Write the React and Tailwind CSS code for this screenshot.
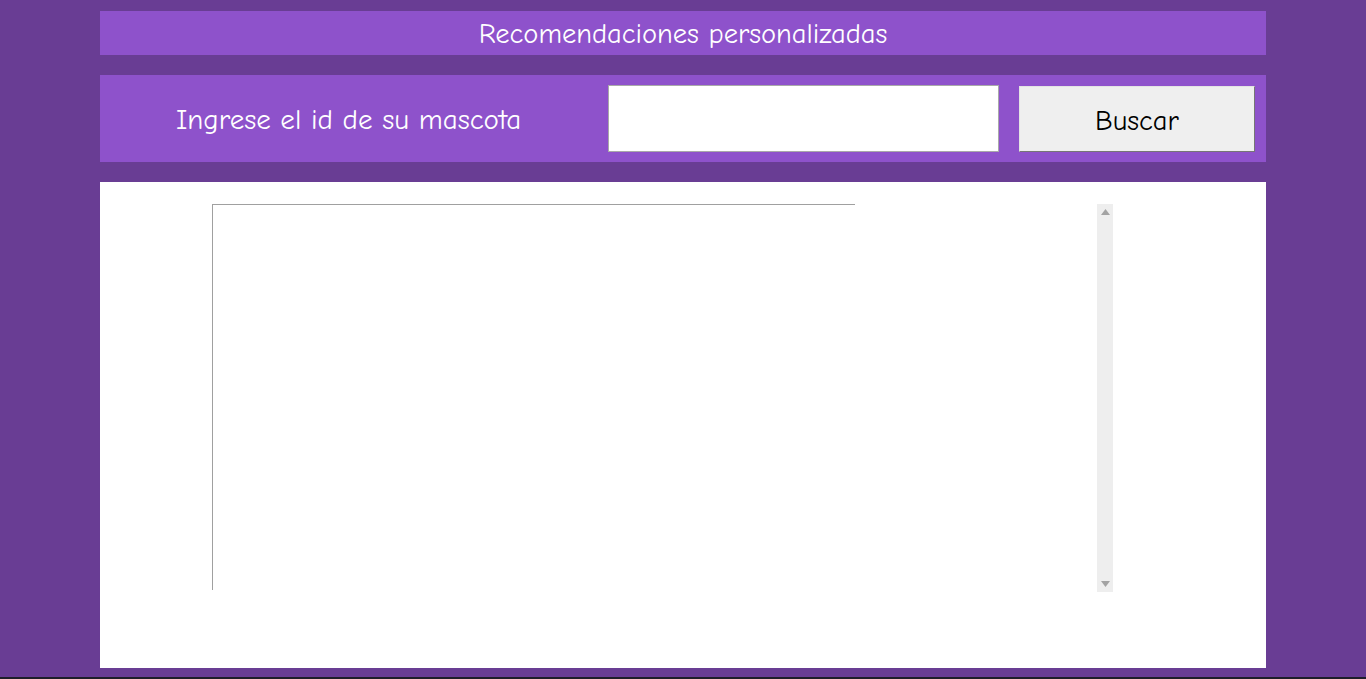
import React from "react";

export default function App() {
  return (
    <div
      className="min-h-[679px] bg-[#693d94] border-b-2 border-[#1e1e2a] px-[100px] pt-[11px] pb-[9px] flex flex-col gap-[20px]"
      style={{ fontFamily: '"Comic Sans MS", "Comic Neue", "Open Sans", sans-serif' }}
    >
      {/* título */}
      <div className="h-[44px] bg-[#8e52cb] flex items-center justify-center pt-[3px] text-white text-[28.5px]">
        Recomendaciones personalizadas
      </div>

      {/* búsqueda */}
      <div className="h-[87px] bg-[#8e52cb] flex items-center pr-[11px]">
        <div className="w-[497px] text-center text-white text-[29px] pt-[2px]">Ingrese el id de su mascota</div>
        <input
          type="text"
          className="ml-[11px] w-[391px] h-[67px] bg-white border border-[#a9a9a9] outline-none"
        />
        <button className="ml-[20px] w-[236px] h-[66px] pt-[5px] bg-[#efefef] border border-t-[#e3e3e3] border-l-[#e3e3e3] border-r-[#767676] border-b-[#767676] text-black text-[28.5px] font-medium">
          Buscar
        </button>
      </div>

      {/* resultados */}
      <div className="flex-1 bg-white flex items-start pl-[112px] pt-[22px]">
        <div className="w-[643px] h-[386px] border-l border-t border-[#a0a0a0]" />
        <div className="ml-[242px] w-[16px] h-[388px] bg-[#eeeeee] flex flex-col items-center justify-between pt-[5px] pb-[5px]">
          <svg width="9" height="6" viewBox="0 0 9 6"><path d="M4.5 0 L9 6 L0 6 Z" fill="#a3a3a3" /></svg>
          <svg width="9" height="6" viewBox="0 0 9 6"><path d="M0 0 L9 0 L4.5 6 Z" fill="#a3a3a3" /></svg>
        </div>
      </div>
    </div>
  );
}
